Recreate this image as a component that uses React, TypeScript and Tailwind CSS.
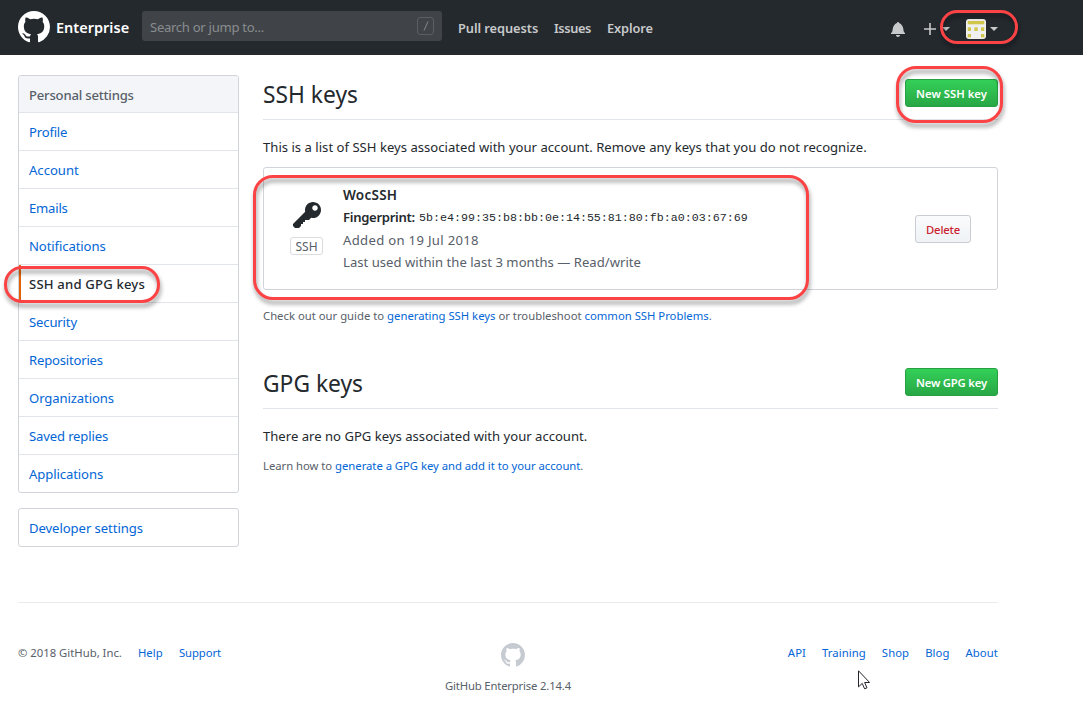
import type { ReactNode } from "react";

const MARK =
  "M8 0C3.58 0 0 3.58 0 8c0 3.54 2.29 6.53 5.47 7.59.4.07.55-.17.55-.38 0-.19-.01-.82-.01-1.49-2.01.37-2.53-.49-2.69-.94-.09-.23-.48-.94-.82-1.13-.28-.15-.68-.52-.01-.53.63-.01 1.08.58 1.23.82.72 1.21 1.87.87 2.33.66.07-.52.28-.87.51-1.07-1.78-.2-3.64-.89-3.64-3.95 0-.87.31-1.59.82-2.15-.08-.2-.36-1.02.08-2.12 0 0 .67-.21 2.2.82.64-.18 1.32-.27 2-.27.68 0 1.36.09 2 .27 1.53-1.04 2.2-.82 2.2-.82.44 1.1.16 1.92.08 2.12.51.56.82 1.27.82 2.15 0 3.07-1.87 3.75-3.65 3.95.29.25.54.73.54 1.48 0 1.07-.01 1.93-.01 2.2 0 .21.15.46.55.38A8.013 8.013 0 0 0 16 8c0-4.42-3.58-8-8-8z";
const BELL =
  "M14 12v1H0v-1l.73-.58c.77-.77.81-2.55 1.19-4.42C2.69 3.23 6 2 6 2c0-.55.45-1 1-1s1 .45 1 1c0 0 3.39 1.23 4.16 5 .38 1.88.42 3.66 1.19 4.42l.66.58H14zm-7 4c1.11 0 2-.89 2-2H5c0 1.11.89 2 2 2z";
const KEY =
  "M12.83 2.17C12.08 1.42 11.14 1.03 10 1c-1.13.03-2.08.42-2.83 1.17S6.04 3.86 6.01 5c0 .3.03.59.09.89L0 12v1l1 1h2l1-1v-1h1v-1h1v-1h2l1.09-1.11c.3.08.59.11.91.11 1.14-.03 2.08-.42 2.83-1.17S13.97 6.14 14 5c-.03-1.14-.42-2.08-1.17-2.83zM11 5.38c-.77 0-1.38-.61-1.38-1.38 0-.77.61-1.38 1.38-1.38.77 0 1.38.61 1.38 1.38 0 .77-.61 1.38-1.38 1.38z";

const navItems = [
  { label: "Profile", tracking: "tracking-[-0.2px]" },
  { label: "Account", tracking: "tracking-normal" },
  { label: "Emails", tracking: "tracking-[-0.2px]" },
  { label: "Notifications", tracking: "tracking-[-0.1px]" },
  { label: "SSH and GPG keys", tracking: "tracking-[0.18px]", current: true },
  { label: "Security", tracking: "tracking-[-0.15px]" },
  { label: "Repositories", tracking: "tracking-[-0.2px]" },
  { label: "Organizations", tracking: "tracking-[-0.1px]" },
  { label: "Saved replies", tracking: "tracking-[-0.15px]" },
  { label: "Applications", tracking: "tracking-[-0.1px]" },
];

function Caret() {
  return <span className="size-0 border-x-4 border-t-4 border-x-transparent border-t-[#c8c9ca]" />;
}

function Avatar() {
  return (
    <svg viewBox="0 0 20 20" className="size-5">
      <rect width="20" height="20" rx="3" fill="#f0f0f0" />
      <g fill="#cfc64a">
        <rect x="1.7" y="2" width="16.6" height="3.3" />
        <rect x="1.7" y="8.3" width="3.3" height="3.7" />
        <rect x="8.4" y="8.3" width="3.3" height="3.7" />
        <rect x="15" y="8.3" width="3.3" height="3.7" />
        <rect x="1.7" y="15" width="3.3" height="3.3" />
        <rect x="15" y="15" width="3.3" height="3.3" />
      </g>
    </svg>
  );
}

function Header() {
  return (
    <header className="flex h-[55px] items-start bg-[#24292e] pl-[18px]">
      <svg viewBox="0 0 16 16" className="mt-[11px] size-8 shrink-0 fill-white"><path d={MARK} /></svg>
      <span className="mt-[17px] ml-1.5 w-[86px] text-[14.5px] leading-5 font-semibold text-white">Enterprise</span>
      <div className="mt-[11px] flex h-[30px] w-[300px] items-start justify-between rounded-[3px] bg-[#404448] pr-2 pl-2">
        <span className="mt-1.5 text-[13.1px] leading-5 tracking-[-0.3px] text-[#898c8f]">Search or jump to...</span>
        <span className="mt-1.5 flex h-[18px] w-[17px] items-center justify-center rounded-[3px] border border-[#5b5f63]">
          <svg viewBox="0 0 6 10" className="h-2.5 w-1.5" fill="none" stroke="#85888b"><path d="M5 .5 1 9.5" /></svg>
        </span>
      </div>
      <nav className="mt-[18px] ml-4 flex gap-4 text-[12.8px] leading-5 font-semibold text-[#c8c9cb]">
        <a className="w-20 tracking-[-0.05px] whitespace-nowrap">Pull requests</a>
        <a className="w-[37px] tracking-[-0.4px]">Issues</a>
        <a className="tracking-[-0.1px]">Explore</a>
      </nav>
      <div className="mt-[19px] mr-[85px] ml-auto flex h-5 items-center">
        <svg viewBox="0 0 14 16" className="-mt-px h-4 w-3.5 fill-[#c8c9ca]"><path d={BELL} /></svg>
        <svg viewBox="0 0 12 16" className="-mt-px mr-[6px] ml-[19px] h-4 w-3 fill-[#c8c9ca]"><path d="M12 8.7H6.8V14H5.2V8.7H0V7.2h5.2V2h1.6v5.2H12z" /></svg>
        <Caret />
        <span className="mr-1 ml-4"><Avatar /></span>
        <Caret />
      </div>
    </header>
  );
}

function Sidebar() {
  return (
    <aside className="w-[221px] shrink-0 text-[13.1px] leading-5">
      <nav className="overflow-hidden rounded-[3px] border border-[#d1d5da]">
        <h3 className="h-[37px] border-b border-[#e1e4e8] bg-[#f3f5f8] pt-[9px] pl-2.5 font-medium tracking-[-0.2px] text-[#586069]">
          Personal settings
        </h3>
        {navItems.map((item) => (
          <a
            key={item.label}
            className={
              "flex h-[38px] items-center border-b border-[#e1e4e8] pt-px last:h-[37px] last:border-b-0 last:pt-0 " +
              item.tracking +
              (item.current
                ? " border-l-2 border-l-[#e36209] pl-2 font-medium text-[#24292e]"
                : " pl-2.5 text-[#0366d6]")
            }
          >
            {item.label}
          </a>
        ))}
      </nav>
      <nav className="mt-[15px] flex h-[39px] items-center rounded-[3px] border border-[#d1d5da] pt-px pl-2.5 tracking-[-0.07px] text-[#0366d6]">
        Developer settings
      </nav>
    </aside>
  );
}

function SectionHead({ title, action, spacing }: { title: string; action: string; spacing: string }) {
  return (
    <div className="flex h-[45px] items-start justify-between border-b border-[#e1e4e8]">
      <h2 className="pt-1 text-[22.8px] leading-8 text-[#24292e]">{title}</h2>
      <button
        className={
          "mt-1 h-7 w-[93px] rounded-[3px] border border-[#279f43] bg-linear-to-b from-[#34d058] to-[#28a745] pt-px text-[11.3px] leading-[26px] font-semibold whitespace-nowrap text-white " +
          spacing
        }
      >
        {action}
      </button>
    </div>
  );
}

function Link({ children }: { children: ReactNode }) {
  return <a className="text-[#0366d6]">{children}</a>;
}

function Ring({ className }: { className: string }) {
  return (
    <div
      className={
        "pointer-events-none absolute border-3 border-[#fb4345] drop-shadow-[1px_4px_2px_rgba(0,0,0,0.4)] " + className
      }
    />
  );
}

export default function App() {
  return (
    <div className="relative h-[724px] w-[1083px] overflow-hidden bg-white font-['Noto_Sans',sans-serif] text-[13.1px] leading-5 text-[#24292e]">
      <Header />
      <div className="ml-[18px] w-[980px]">
        <div className="flex h-[548px] gap-6 border-b border-[#eaecef] pt-5">
          <Sidebar />
          <main className="w-[735px]">
            <SectionHead title="SSH keys" action="New SSH key" spacing="tracking-normal" />
            <p className="mt-[17px] tracking-[0.01px] whitespace-nowrap">
              This is a list of SSH keys associated with your account. Remove any keys that you do not recognize.
            </p>
            <div className="mt-[10px] flex h-[123px] rounded-[3px] border border-[#d1d5da]">
              <div className="ml-[26px] flex w-[33px] flex-col items-center pt-8">
                <svg viewBox="0 0 14 16" className="h-8 w-7 shrink-0 fill-[#24292e]"><path d={KEY} /></svg>
                <span className="mt-[5px] h-[18px] w-[33px] rounded-[3px] border border-[#d9dbde] text-center text-[12px] leading-[17px] text-[#586069]">
                  SSH
                </span>
              </div>
              <div className="ml-5 pt-4 leading-[22.4px] whitespace-nowrap text-[#586069]">
                <p className="text-[13.5px] font-semibold tracking-[0.25px] text-[#24292e]">WocSSH</p>
                <p className="flex text-[#24292e]">
                  <span className="w-[76px] font-semibold tracking-[-0.3px]">Fingerprint:</span>
                  <code className="pt-px font-['Liberation_Mono',monospace] text-[11.67px]">
                    5b:e4:99:35:b8:bb:0e:14:55:81:80:fb:a0:03:67:69
                  </code>
                </p>
                <p className="-mt-px tracking-[0.32px]">Added on 19 Jul 2018</p>
                <p className="tracking-[0.02px]">Last used within the last 3 months — Read/write</p>
              </div>
              <button className="mt-[47px] mr-[26px] ml-auto h-7 w-14 rounded-[3px] border border-[#c9ccd0] bg-linear-to-b from-[#fafbfc] to-[#eff3f6] text-[11.3px] leading-[27px] font-medium tracking-[-0.2px] text-[#cb2431]">
                Delete
              </button>
            </div>
            <p className="mt-4 text-[11.3px] text-[#586069]">
              Check out our guide to <Link>generating SSH keys</Link> or troubleshoot <Link>common SSH Problems</Link>.
            </p>
            <div className="mt-[38px]">
              <SectionHead title="GPG keys" action="New GPG key" spacing="tracking-[-0.2px]" />
            </div>
            <p className="mt-[17px]">There are no GPG keys associated with your account.</p>
            <p className="mt-[10px] text-[11.3px] tracking-[-0.03px] text-[#586069]">
              Learn how to <Link>generate a GPG key and add it to your account</Link>.
            </p>
          </main>
        </div>
        <footer className="grid grid-cols-[427px_126px_427px] pt-10 text-[11.3px] text-[#586069]">
          <div className="flex">
            <span className="w-[120px]">© 2018 GitHub, Inc.</span>
            <span className="w-[41px]"><Link>Help</Link></span>
            <span className="tracking-[-0.1px]"><Link>Support</Link></span>
          </div>
          <div className="flex flex-col items-center">
            <svg viewBox="0 0 16 16" className="ml-[10px] size-6 fill-[#c6cbd1]"><path d={MARK} /></svg>
            <span className="mt-[9px] tracking-[-0.17px] whitespace-nowrap">GitHub Enterprise 2.14.4</span>
          </div>
          <div className="flex justify-end gap-4 tracking-[0.08px]">
            <Link>API</Link>
            <Link>Training</Link>
            <Link>Shop</Link>
            <Link>Blog</Link>
            <Link>About</Link>
          </div>
        </footer>
      </div>

      <Ring className="top-[10px] left-[940px] h-[34px] w-[78px] rounded-[17px]" />
      <Ring className="top-[66px] left-[896px] h-[57px] w-[107px] rounded-[20px]" />
      <Ring className="top-[175px] left-[253px] h-[125px] w-[556px] rounded-[20px]" />
      <Ring className="top-[266px] left-1 h-[37px] w-[156px] rounded-[18px]" />
      <svg viewBox="0 0 12 20" className="absolute top-[670px] left-[858px] h-5 w-3" fill="#fff" stroke="#24242f">
        <path d="M.5.8v16.1l3.7-3.5 2.4 5.4 2.4-1-2.4-5.3h5z" />
      </svg>
    </div>
  );
}
